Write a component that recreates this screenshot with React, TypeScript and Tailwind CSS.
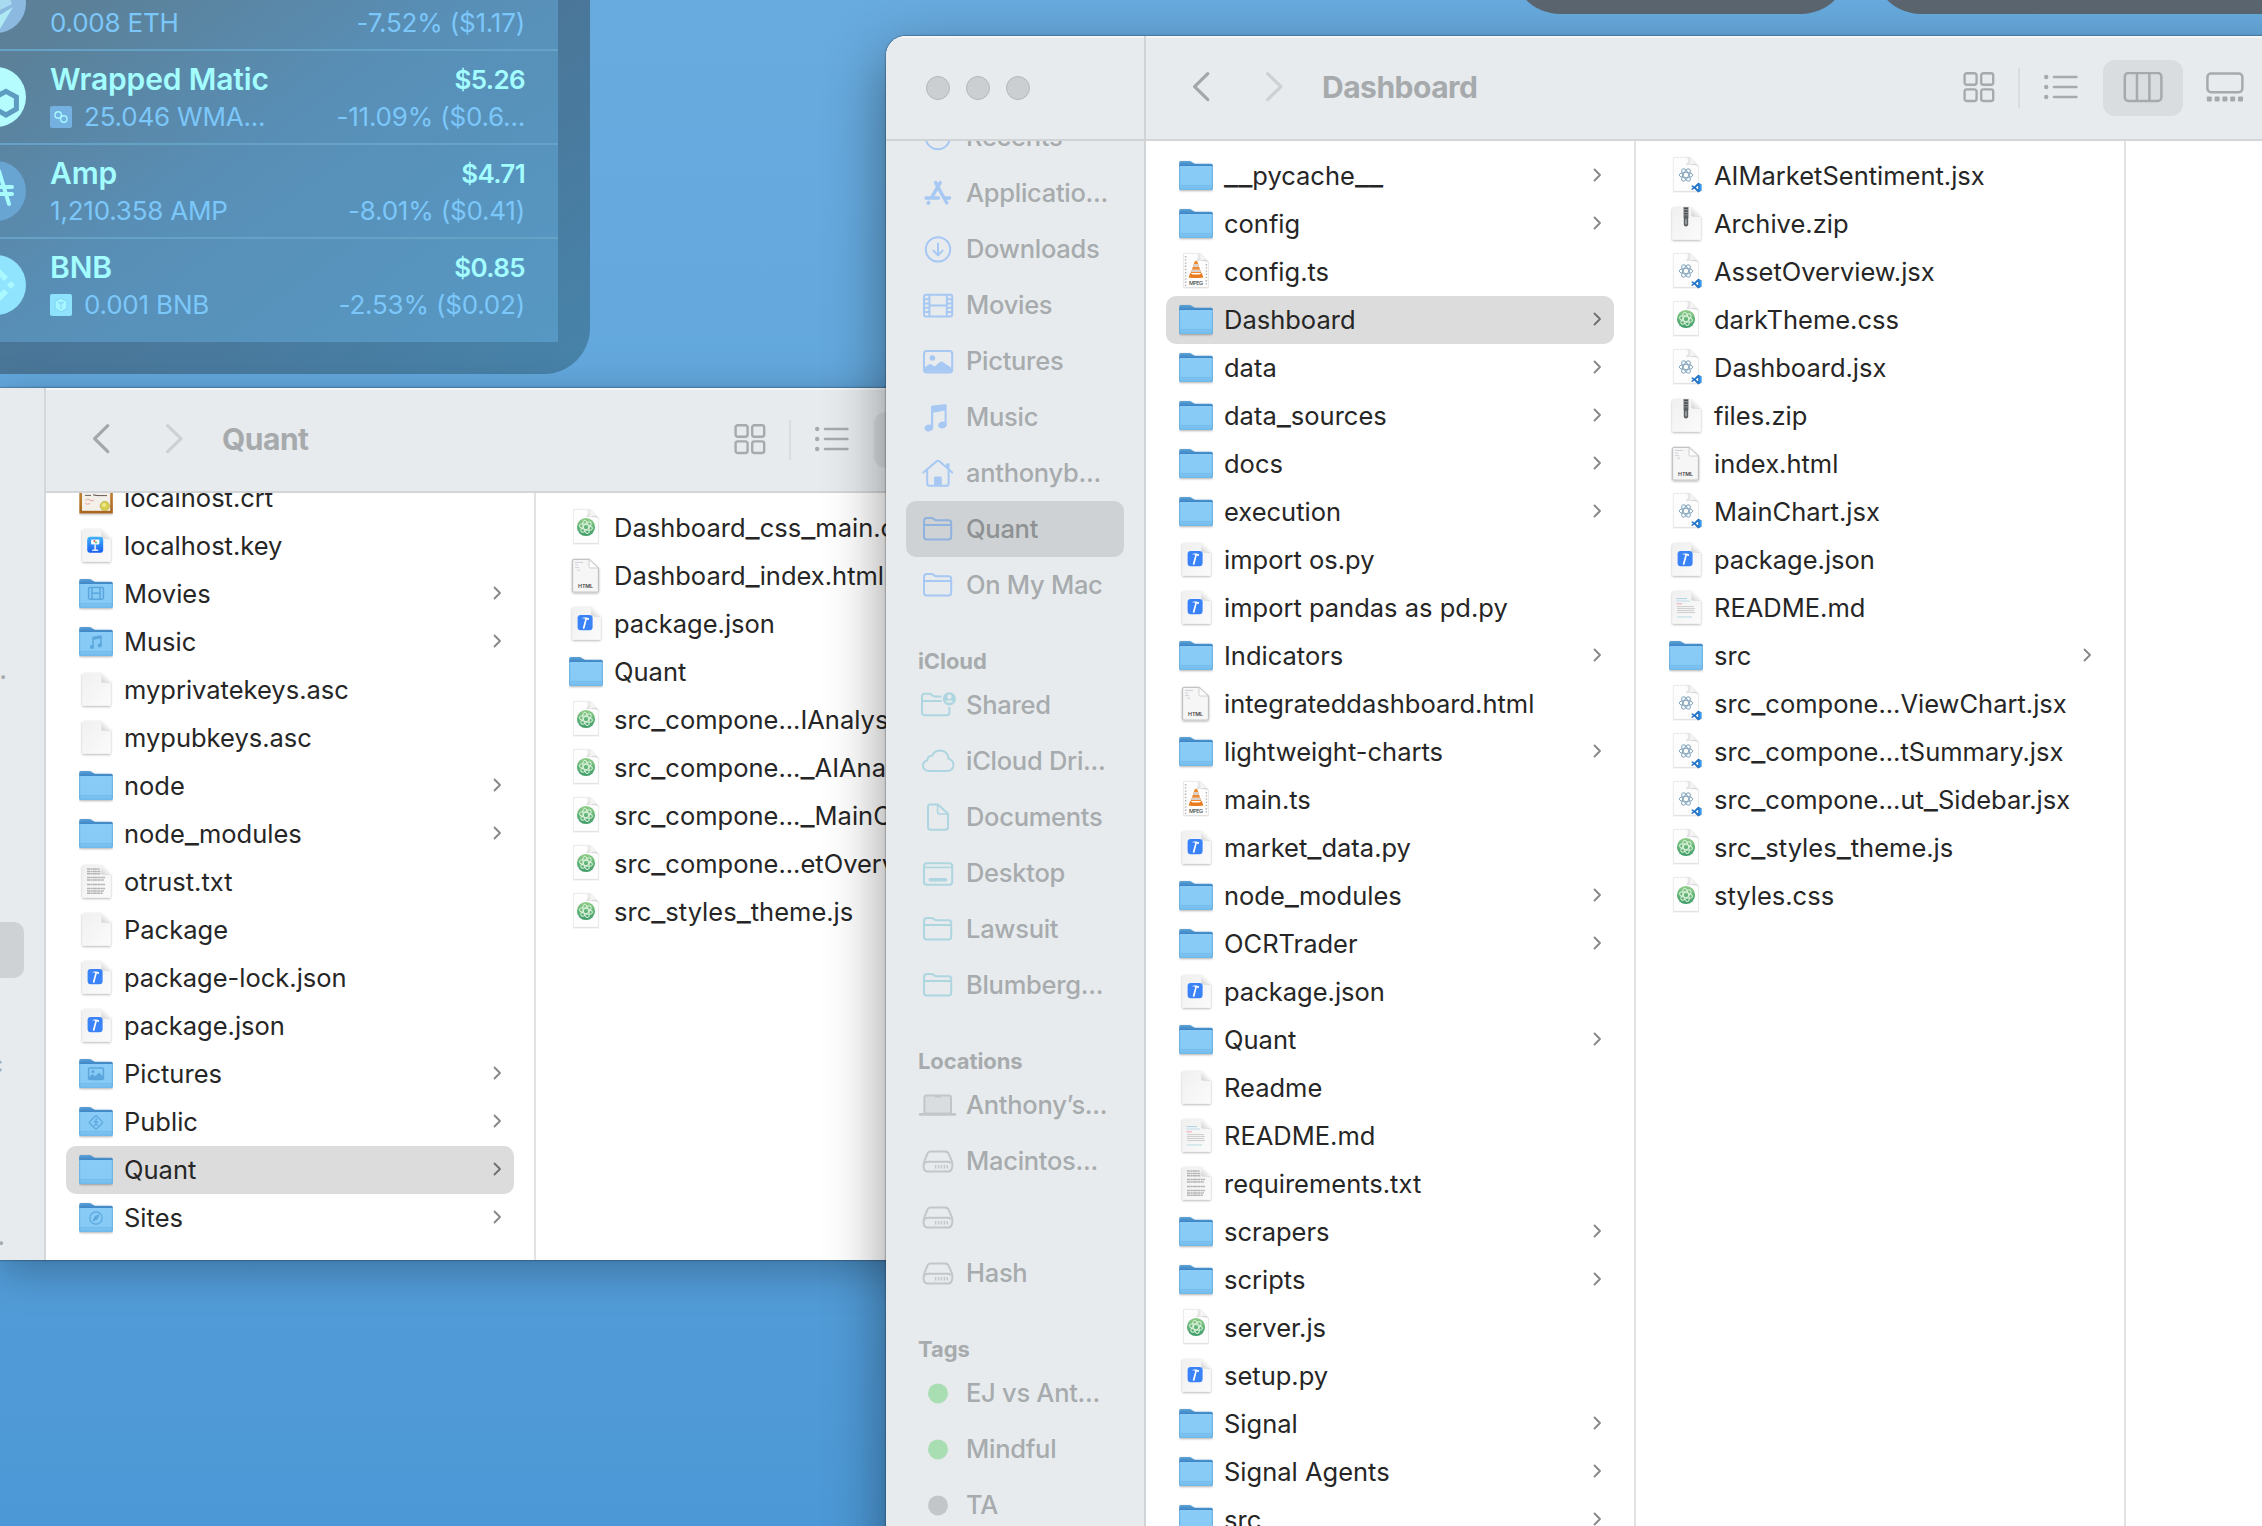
import React from "react";

type Kind =
  | "folder" | "movies" | "music" | "pictures" | "public" | "sites"
  | "blank" | "xcode" | "atom" | "react" | "html" | "zip" | "vlc" | "md" | "txt" | "keynote" | "cert";
type Entry = [string, Kind];

/* ---------- file icons, drawn in a 34x48 row-high box ---------- */

function Defs() {
  return (
    <svg width="0" height="0" className="absolute">
      <defs>
        <linearGradient id="fFront" x1="0" y1="0" x2="0" y2="1">
          <stop offset="0" stopColor="#8accf7" />
          <stop offset="0.78" stopColor="#86caf6" />
          <stop offset="1" stopColor="#6fb8e8" />
        </linearGradient>
        <linearGradient id="fBack" x1="0" y1="0" x2="0" y2="1">
          <stop offset="0" stopColor="#5ba2d6" />
          <stop offset="0.16" stopColor="#3f87c7" />
        </linearGradient>
        <linearGradient id="paper" x1="0" y1="0" x2="1" y2="1">
          <stop offset="0" stopColor="#f0f0f0" />
          <stop offset="1" stopColor="#fbfbfb" />
        </linearGradient>
        <linearGradient id="fold" x1="0" y1="1" x2="1" y2="0">
          <stop offset="0" stopColor="#d2d2d2" />
          <stop offset="0.6" stopColor="#fafafa" />
        </linearGradient>
        <linearGradient id="atomG" x1="0" y1="0" x2="0" y2="1">
          <stop offset="0" stopColor="#8fcd88" />
          <stop offset="1" stopColor="#3c9c6b" />
        </linearGradient>
        <linearGradient id="keyG" x1="0" y1="0" x2="0" y2="1">
          <stop offset="0" stopColor="#3fb2f8" />
          <stop offset="1" stopColor="#1a5df0" />
        </linearGradient>
        <linearGradient id="certG" x1="0" y1="0" x2="0" y2="1">
          <stop offset="0" stopColor="#c98a3c" />
          <stop offset="1" stopColor="#a8651b" />
        </linearGradient>
        <filter id="soft" x="-20%" y="-20%" width="140%" height="150%">
          <feDropShadow dx="0" dy="0.9" stdDeviation="0.8" floodColor="#000" floodOpacity="0.32" />
        </filter>
      </defs>
    </svg>
  );
}

function Folder({ children }: { children?: React.ReactNode }) {
  return (
    <>
      <g filter="url(#soft)">
        <path d="M0.2 10.6Q0.2 9 1.8 9H10.4Q11.8 9 12.8 9.9L14.4 11.1Q15.2 11.8 16.4 11.8H32.2Q33.8 11.8 33.8 13.4V36.2Q33.8 38 32 38H2Q0.2 38 0.2 36.2Z" fill="url(#fBack)" />
        <path d="M0.2 15.6Q0.2 13.9 1.8 13.9H32.2Q33.8 13.9 33.8 15.6V36.2Q33.8 38 32 38H2Q0.2 38 0.2 36.2Z" fill="url(#fFront)" />
      </g>
      <path d="M1 33.6H33" stroke="#6db6e6" strokeWidth="0.8" />
      <path d="M0.7 16V36.4M33.3 16V36.4" stroke="#67aede" strokeWidth="0.8" />
      <g stroke="#5ba6dc" fill="none" strokeWidth="1.5" strokeLinecap="round" strokeLinejoin="round">{children}</g>
    </>
  );
}

function Paper({ children }: { children?: React.ReactNode }) {
  return (
    <>
      <path d="M3.2 8.6Q3.2 7 4.8 7H22.2L31.8 16.2V38.2Q31.8 39.8 30.2 39.8H4.8Q3.2 39.8 3.2 38.2Z" fill="url(#paper)" filter="url(#soft)" />
      <path d="M22.2 7L31.8 16.2H23.8Q22.2 16.2 22.2 14.6Z" fill="url(#fold)" />
      <path d="M22.2 15.2Q22.6 16.6 24 16.6H31" stroke="#dcdcdc" strokeWidth="0.8" fill="none" />
      {children}
    </>
  );
}

function ThinPaper({ children }: { children?: React.ReactNode }) {
  return (
    <>
      <path d="M4.4 5.4H21.2L29.6 14V39.4H4.4Z" fill="#fdfdfd" stroke="#e6e6e6" strokeWidth="0.9" />
      <path d="M4 39.8H30" stroke="#dcdcdc" strokeWidth="0.9" />
      <path d="M21.2 5.4L29.6 14Q24.4 12.4 16.6 13.2Q20.2 9.4 18.2 5.6Z" fill="#e6e6e6" />
      <path d="M20.4 5.4L29.6 14Q25 12.6 21.4 12.6Q22.2 9.2 20.4 5.4Z" fill="#f6f6f6" />
      <path d="M21.4 12.6Q25 12.4 29.6 14Q26 10.6 21.4 12.6Z" fill="#cccccc" />
      {children}
    </>
  );
}

function Orbits({ s, color, w, turn }: { s: number; color: string; w: number; turn: number }) {
  return (
    <g stroke={color} strokeWidth={w} fill="none">
      {[0, 60, 120].map((a) => (
        <ellipse key={a} cx="17" cy="23" rx={s} ry={s * 0.4} transform={`rotate(${a + turn} 17 23)`} />
      ))}
    </g>
  );
}

function glyph(kind: Kind): React.ReactNode {
  switch (kind) {
    case "folder":
      return <Folder />;
    case "movies":
      return (
        <Folder>
          <rect x="9.6" y="17.4" width="14.8" height="11.8" rx="1.4" />
          <path d="M12.9 17.4V29.2M21.1 17.4V29.2M12.9 23.3H21.1" />
        </Folder>
      );
    case "music":
      return (
        <Folder>
          <path d="M14 29V19.6L22 18V27.4M14 21.2L22 19.6" />
          <circle cx="12.8" cy="29" r="1.3" fill="#5ba6dc" />
          <circle cx="20.8" cy="27.4" r="1.3" fill="#5ba6dc" />
        </Folder>
      );
    case "pictures":
      return (
        <Folder>
          <rect x="9.6" y="18" width="14.8" height="11.4" rx="1.4" />
          <path d="M10 28L13.4 25L16 27L20 23.6L24 27.4V29H10Z" fill="#5ba6dc" />
          <circle cx="14" cy="21.6" r="0.8" fill="#5ba6dc" />
        </Folder>
      );
    case "public":
      return (
        <Folder>
          <rect x="12" y="19.4" width="10" height="10" rx="1.2" transform="rotate(45 17 24.4)" strokeWidth="1.2" />
          <path d="M17 22.6V25.2L15.6 27.6M17 25.2L18.4 27.4M15 23.8L17 23L19 24.4" strokeWidth="1.1" />
          <circle cx="17.2" cy="21" r="0.6" fill="#5ba6dc" strokeWidth="0.6" />
        </Folder>
      );
    case "sites":
      return (
        <Folder>
          <circle cx="17" cy="24" r="6.2" strokeWidth="1.2" />
          <path d="M19.8 21.2L18 25L14.2 26.8L16 23Z" strokeWidth="1" fill="#5ba6dc" />
        </Folder>
      );
    case "blank":
      return <Paper />;
    case "xcode":
      return (
        <Paper>
          <rect x="8.6" y="15" width="15" height="15.2" rx="3.2" fill="#3a82f7" />
          <path d="M14.7 28L17 19.4" stroke="#fff" strokeWidth="1.7" strokeLinecap="round" />
          <path d="M12.4 18.4Q14.6 16.9 17.4 17.6L20 18.2V20L17.8 19.6Q14.6 18 12.4 18.4Z" fill="#fff" />
        </Paper>
      );
    case "keynote":
      return (
        <Paper>
          <rect x="8.2" y="14.8" width="16" height="16" rx="3.4" fill="url(#keyG)" />
          <rect x="12" y="17.4" width="8.4" height="5" rx="0.8" fill="#f4f8ff" />
          <rect x="15.3" y="22.4" width="1.8" height="5.6" fill="#dbe5f5" />
          <rect x="13" y="27.6" width="6.4" height="1.3" rx="0.6" fill="#dbe5f5" />
          <circle cx="15.4" cy="19" r="0.9" fill="#e8552e" />
          <circle cx="17" cy="20.4" r="0.9" fill="#49b64d" />
        </Paper>
      );
    case "txt":
      return (
        <Paper>
          <g stroke="#b4b4b4" strokeWidth="1.5" strokeDasharray="3.2 0.4 2 0.3 4 0.3">
            <path d="M8 11H20.6" />
            <path d="M8 13.4H21.6" />
            <path d="M8 15.8H21.6" />
            <path d="M8 19.6H26" />
            <path d="M8 22H25" />
            <path d="M8 26.4H26" />
            <path d="M8 30.6H26" />
            <path d="M8 33H25" />
            <path d="M8 35.2H24" />
          </g>
        </Paper>
      );
    case "md":
      return (
        <Paper>
          <path d="M7.4 14.6H18" stroke="#a9d4e6" strokeWidth="1" />
          <path d="M7.4 17H21" stroke="#b7dbe8" strokeWidth="0.9" />
          <path d="M7.4 19.8H13" stroke="#f0a9bd" strokeWidth="1" />
          <path d="M8 22.6H25M8 24.6H26M8 26.6H25M8 28.6H26" stroke="#cdcdcd" strokeWidth="1" />
          <path d="M8 33H23" stroke="#b9dbe4" strokeWidth="1" />
        </Paper>
      );
    case "zip":
      return (
        <Paper>
          <rect x="14.4" y="7" width="5.2" height="11" fill="#8b8f92" />
          <path d="M15 8.4H19M15 11H19M15 13.6H19M15 16.2H19" stroke="#4b5053" strokeWidth="1.3" />
          <rect x="14.8" y="16" width="4.4" height="10.4" rx="1.8" fill="#5d6265" />
          <rect x="16.2" y="19" width="1.6" height="5.4" rx="0.6" fill="#a0a4a6" />
        </Paper>
      );
    case "html":
      return (
        <>
          <path d="M3.6 9Q3.6 7.4 5.2 7.4H20L29.4 16V38.6Q29.4 40 28 40H5Q3.6 40 3.6 38.6Z" fill="#f6f6f6" stroke="#c3c3c3" strokeWidth="1.1" filter="url(#soft)" />
          <path d="M20 7.4L29.4 16H21.4Q20 16 20 14.6Z" fill="#fdfdfd" stroke="#c9c9c9" strokeWidth="0.9" />
          <path d="M6 10.4H14M6 13H9M6 15.6H10M8 18.2H11" stroke="#cfd0da" strokeWidth="1" />
          <text x="16.6" y="36.4" textAnchor="middle" fontSize="5.4" fontWeight="600" fontFamily="Inter, sans-serif" fill="#4a4a4a" textLength="15">HTML</text>
        </>
      );
    case "vlc":
      return (
        <ThinPaper>
          <path d="M6.6 8V38M27.4 16V38" stroke="#b5b5b5" strokeWidth="1.5" strokeDasharray="1.4 1.8" />
          <path d="M15.6 13.4Q17 12 18.4 13.4L22.2 25H11.8Z" fill="#f08a2c" />
          <path d="M14.9 16H19.1L20 19H14ZM13.2 21.4H20.8L21.6 24H12.4Z" fill="#d9d2cc" />
          <path d="M11.4 24.4L9.6 29.4Q17 30.6 24.4 29.4L22.6 24.4Q22 26.6 17 26.6Q12 26.6 11.4 24.4Z" fill="#e97d1e" />
          <text x="17" y="37" textAnchor="middle" fontSize="5.4" fontWeight="500" fontFamily="Inter, sans-serif" fill="#4a4a4a" textLength="14">MPEG</text>
        </ThinPaper>
      );
    case "atom":
      return (
        <ThinPaper>
          <circle cx="17" cy="23" r="9.1" fill="url(#atomG)" />
          <Orbits s={6.6} color="#def3dc" w={1} turn={15} />
        </ThinPaper>
      );
    case "react":
      return (
        <ThinPaper>
          <Orbits s={6.8} color="#85a5be" w={1} turn={0} />
          <path d="M29.2 30.8L32.4 32.2V38.8L29.2 40.4L25.2 36.6L23.4 38L22.2 37.2L24 35.6L22.2 34L23.4 33.2L25.2 34.6ZM29.2 33.6L26.8 35.6L29.2 37.6Z" fill="#2272c6" fillRule="evenodd" />
          <path d="M30.6 31.4L32.4 32.2V38.8L30.6 39.6Z" fill="#3c9cf0" />
        </ThinPaper>
      );
    case "cert":
      return (
        <>
          <rect x="0.4" y="12" width="33.4" height="27.4" fill="url(#certG)" filter="url(#soft)" />
          <rect x="3" y="14" width="28.2" height="22.8" fill="#f3efe9" />
          <path d="M6 21.4H12M14 20.8L18 21.6H28" stroke="#67625e" strokeWidth="1" />
          <path d="M6.4 26.4Q9 24 11 26T15 26M6.4 29.4Q8 31 11 29.6" stroke="#e5a3a0" strokeWidth="1" fill="none" />
          <circle cx="25.8" cy="32" r="4.6" fill="#d9cf4e" stroke="#bdb146" strokeWidth="0.8" />
          <circle cx="25" cy="31" r="2" fill="#eee88c" />
        </>
      );
  }
}

const hasArrow = (k: Kind) => ["folder", "movies", "music", "pictures", "public", "sites"].includes(k);

/* Underscores are set a little larger so that they are as wide as a letter. */
function FileName({ name }: { name: string }) {
  return (
    <>
      {name.split(/(_+)/).map((part, i) =>
        part.startsWith("_") ? (
          <span key={i} className="text-[31px] leading-none">{part}</span>
        ) : (
          part
        ),
      )}
    </>
  );
}

function Row({ entry: [name, kind], selected }: { entry: Entry; selected?: boolean }) {
  return (
    <div className={`flex h-12 shrink-0 items-center rounded-[10px] pr-3 pl-[13px] ${selected ? "bg-[#dcdcdc]" : ""}`}>
      <svg width="34" height="48" viewBox="0 0 34 48" className="shrink-0">{glyph(kind)}</svg>
      <span className="mb-px ml-[11px] h-[46px] grow whitespace-nowrap text-[25.5px] leading-[46px] tracking-[0px] text-[#262626]">
        <FileName name={name} />
      </span>
      {hasArrow(kind) && (
        <svg width="9" height="14" viewBox="0 0 9 14" fill="none" className="mb-0.5 shrink-0">
          <path d="M1.5 1.5L7 7L1.5 12.5" stroke={selected ? "#6f6f6f" : "#868686"} strokeWidth="1.8" strokeLinecap="round" strokeLinejoin="round" />
        </svg>
      )}
    </div>
  );
}

function Column({ items, selected, className }: { items: Entry[]; selected?: number; className: string }) {
  return (
    <div className={`flex w-[490px] shrink-0 flex-col overflow-hidden border-r-2 border-[#e2e2e2] px-5 ${className}`}>
      {items.map((it, i) => (
        <Row key={i} entry={it} selected={i === selected} />
      ))}
    </div>
  );
}

/* ---------- toolbar ---------- */

function NavArrows() {
  return (
    <svg width="92" height="32" viewBox="0 0 92 32" fill="none" strokeWidth="3.2" strokeLinecap="round" strokeLinejoin="round" className="mb-px">
      <path d="M15.8 2.6L2.6 15.6L15.8 28.6" stroke="#a3a7a9" />
      <path d="M75.6 2.6L89 15.6L75.6 28.6" stroke="#cdd1d3" />
    </svg>
  );
}

function GridIcon() {
  return (
    <svg width="32" height="32" viewBox="0 0 32 32" fill="none" stroke="#a6aaac" strokeWidth="2.4">
      <rect x="1.6" y="1.2" width="12" height="11.6" rx="2.2" />
      <rect x="18.2" y="1.2" width="12" height="11.6" rx="2.2" />
      <rect x="1.6" y="17.4" width="12" height="11.6" rx="2.2" />
      <rect x="18.2" y="17.4" width="12" height="11.6" rx="2.2" />
    </svg>
  );
}

function ListIcon() {
  return (
    <svg width="34" height="28" viewBox="0 0 34 28" fill="none" stroke="#a6aaac" strokeWidth="2.6" strokeLinecap="round">
      {[3, 13, 23].map((y) => (
        <g key={y}>
          <circle cx="2.2" cy={y} r="2.2" fill="#a6aaac" stroke="none" />
          <path d={`M10 ${y}H32.4`} />
        </g>
      ))}
    </svg>
  );
}

function Toolbar({ title, titleWidth }: { title: string; titleWidth: string }) {
  return (
    <div className="flex h-[105px] shrink-0 items-center border-b-2 border-[#d3d6d8] bg-[#e7ebee] pl-[46px] shadow-[inset_0_2px_0_#f4f6f7]">
      <NavArrows />
      <div className={`mb-px ml-[38px] text-[30px] leading-9 font-bold tracking-[-0.5px] text-[#a6aaac] ${titleWidth}`}>{title}</div>
      <ViewButtons />
    </div>
  );
}

function ViewButtons() {
  return (
    <div className="flex items-center">
      <GridIcon />
      <div className="ml-[23px] h-10 w-0.5 bg-[#d9dde0]" />
      <div className="ml-6"><ListIcon /></div>
      <div className="ml-[25px] flex h-14 w-20 items-center justify-center rounded-[12px] bg-[#d9dde0]">
        <svg width="40" height="32" viewBox="0 0 40 32" fill="none" stroke="#a6aaac" strokeWidth="2.5">
          <rect x="1.8" y="1" width="36.6" height="28" rx="3.6" />
          <path d="M14 1V29M26.4 1V29" />
        </svg>
      </div>
      <svg width="38" height="32" viewBox="0 0 38 32" fill="none" stroke="#a6aaac" strokeWidth="2.5" className="ml-[23px]">
        <rect x="1.4" y="1.6" width="35" height="18.6" rx="3.6" />
        <g fill="#a6aaac" stroke="none">
          {[0.8, 8.6, 16.4, 24.2, 32].map((x) => (
            <rect key={x} x={x} y="24.4" width="5" height="5.2" rx="1" />
          ))}
        </g>
      </svg>
    </div>
  );
}

/* ---------- sidebar ---------- */

const B = "#a6c8f3";
const T = "#aed6e0";
const G = "#c2c6c9";

const folderPath = (
  <>
    <path d="M6 8Q6 5 8.8 5H13.4Q14.6 5 15.6 5.8L16.6 6.6Q17.4 7.2 18.6 7.2H30.6Q33.2 7.2 33.2 10V23.8Q33.2 26.4 30.6 26.4H8.6Q6 26.4 6 23.8Z" />
    <path d="M6 12H33.2" />
  </>
);

const disk = (
  <g stroke={G}>
    <path d="M12.4 6.6H27.2Q29.4 6.6 30.6 8.6L33.4 14.8Q34.4 17 34.4 19.4Q34.4 26.6 29.6 26.6H10Q5.6 26.6 5.6 21.2Q5.6 18 6.6 15.8L9.4 8.6Q10.4 6.6 12.4 6.6Z" />
    <path d="M7 18Q8.6 16.8 10.4 16.8H29.4Q31.4 16.8 33 18" />
    <path d="M17 21.8H30.6" strokeWidth="3.6" strokeDasharray="1.4 1.5" />
  </g>
);

const sideIcons: Record<string, React.ReactNode> = {
  clock: (
    <g stroke={B}>
      <circle cx="19.8" cy="16" r="12.2" />
      <path d="M19.8 8V16H14" />
    </g>
  ),
  apps: (
    <g stroke={B} strokeWidth="3.4" strokeLinecap="round">
      <path d="M17.6 5.6L28.8 26M22.2 5.6L13.6 20.6M8 21H20.6M26.6 21H31.6M10.8 25.4L10.2 26.4" />
    </g>
  ),
  down: (
    <g stroke={B} strokeLinecap="round" strokeLinejoin="round">
      <circle cx="20" cy="16.4" r="12.2" />
      <path d="M20 10.4V21.8M15.4 17.6L20 22.2L24.6 17.6" />
    </g>
  ),
  movie: (
    <g stroke={B}>
      <rect x="6" y="5.8" width="28.2" height="21.6" rx="2" />
      <path d="M11.4 5.8V27.4M28.8 5.8V27.4M11.4 16.6H28.8M6 10.2H11.4M6 14.4H11.4M6 18.8H11.4M6 23H11.4M28.8 10.2H34.2M28.8 14.4H34.2M28.8 18.8H34.2M28.8 23H34.2" />
    </g>
  ),
  picture: (
    <g stroke={B}>
      <rect x="6" y="6" width="28.2" height="21.4" rx="2.6" />
      <circle cx="14.4" cy="13" r="2.8" fill={B} stroke="none" />
      <path d="M6.6 22.6L11.4 19.2Q12.2 18.8 13 19.2L16.6 21.6L22.4 16.8Q23.4 16 24.4 16.8L33.8 23V26.8H6.6Z" fill={B} stroke="none" />
    </g>
  ),
  music: (
    <g fill={B} stroke="none">
      <ellipse cx="10.8" cy="27" rx="4.3" ry="3.3" transform="rotate(-15 10.8 27)" />
      <ellipse cx="24.4" cy="24" rx="4.3" ry="3.3" transform="rotate(-15 24.4 24)" />
      <path d="M13 6.2Q13 4.8 14.4 4.5L27 3.2Q28.6 3 28.6 4.4V24H26.6V9.6L15.2 11.8V27H13Z" />
    </g>
  ),
  home: (
    <g stroke={B} strokeLinecap="round" strokeLinejoin="round">
      <path d="M5.4 15.6L18.6 4.2Q20 3.2 21.4 4.2L34.2 15.6M9.2 13.4V26.4Q9.2 28.8 11.4 28.8H28.4Q30.6 28.8 30.6 26.4V13.4" />
      <path d="M29.8 6.4V11.4" strokeWidth="3.4" strokeLinecap="butt" />
      <path d="M16 28.8V20.8Q16 19.4 17.4 19.4H22.4Q23.8 19.4 23.8 20.8V28.8Z" fill={B} stroke="none" />
    </g>
  ),
  folder: <g stroke={B}>{folderPath}</g>,
  folderSel: <g stroke="#8fb2de">{folderPath}</g>,
  folderT: <g stroke={T}>{folderPath}</g>,
  shared: (
    <g stroke={T}>
      <path d="M23.6 7.4H16.6Q15.4 7.4 14.6 6.8L13.6 5.8Q12.6 4.8 11.4 4.8H6.8Q4 4.8 4 7.6V23.6Q4 26.2 6.6 26.2H28.6Q31.4 26.2 31.4 23.4V18M4 12H23.6" />
      <circle cx="31.4" cy="9.8" r="6.6" fill={T} stroke="none" />
      <circle cx="31.4" cy="7.8" r="2.2" fill="#e7ebee" stroke="none" />
      <path d="M27.4 13.4Q28.4 11.2 31.4 11.2T35.4 13.4" fill="#e7ebee" stroke="none" />
    </g>
  ),
  cloud: (
    <path d="M11.4 26Q5 26 5 20.6Q5 16.4 9.4 15.2Q9.6 11 14 10.8Q16.4 5.6 22 5.6Q29.6 5.8 30.4 13.6Q35.4 15 35.4 19.8Q35.4 26 28.4 26Z" stroke={T} />
  ),
  doc: (
    <g stroke={T} strokeLinejoin="round">
      <path d="M10 5.8Q10 3.4 12.4 3.4H20L30 12.8V26Q30 28.8 27.4 28.8H12.6Q10 28.8 10 26Z" />
      <path d="M19.6 3.4V11Q19.6 13 21.6 13H30" strokeWidth="1.6" />
    </g>
  ),
  desktop: (
    <g stroke={T}>
      <rect x="6" y="6.2" width="28.2" height="21.6" rx="2.8" />
      <path d="M6 10.4H34.2" strokeWidth="1.6" />
      <path d="M12.2 22.8H27.6" strokeWidth="3.4" strokeLinecap="round" />
    </g>
  ),
  laptop: (
    <g stroke={G}>
      <path d="M6.4 24.4V8.8Q6.4 6.6 8.6 6.6H30.8Q33 6.6 33 8.8V24.4Z" fill="#dadde0" />
      <path d="M17 7.6H23" />
      <path d="M2.2 25.4H36.8" strokeWidth="2.8" strokeLinecap="round" />
    </g>
  ),
  disk,
  green: <circle cx="20" cy="16.4" r="10" fill="#a9ddb2" stroke="none" />,
  gray: <circle cx="20" cy="16.4" r="10" fill="#c3c6c8" stroke="none" />,
};

function SideItem({ icon, label, selected }: { icon: string; label: string; selected?: boolean }) {
  return (
    <div className={`mx-5 flex h-14 shrink-0 items-center rounded-[10px] pl-3 ${selected ? "bg-[#ced2d4] text-[#8e9294]" : "text-[#a7abad]"}`}>
      <svg width="40" height="32" viewBox="0 0 40 32" fill="none" strokeWidth="2" className="shrink-0 overflow-visible">{sideIcons[icon]}</svg>
      <span className="ml-2 whitespace-nowrap text-[25.5px] leading-[54px] font-medium tracking-[-0.28px]">{label}</span>
    </div>
  );
}

function SideHead({ children }: { children: string }) {
  return <div className="flex h-16 shrink-0 items-end px-8 pb-1 text-[22px] leading-6 font-bold tracking-[-0.1px] text-[#a7abad]">{children}</div>;
}

/* ---------- data ---------- */

const homeFiles: Entry[] = [
  ["localhost.crt", "cert"], ["localhost.key", "keynote"], ["Movies", "movies"], ["Music", "music"],
  ["myprivatekeys.asc", "blank"], ["mypubkeys.asc", "blank"], ["node", "folder"], ["node_modules", "folder"],
  ["otrust.txt", "txt"], ["Package", "blank"], ["package-lock.json", "xcode"], ["package.json", "xcode"],
  ["Pictures", "pictures"], ["Public", "public"], ["Quant", "folder"], ["Sites", "sites"],
];

const quantFiles: Entry[] = [
  ["Dashboard_css_main.css", "atom"], ["Dashboard_index.html", "html"], ["package.json", "xcode"], ["Quant", "folder"],
  ["src_compone...IAnalysis.js", "atom"], ["src_compone..._AIAnalysis.js", "atom"], ["src_compone..._MainChart.js", "atom"],
  ["src_compone...etOverview.js", "atom"], ["src_styles_theme.js", "atom"],
];

const projectFiles: Entry[] = [
  ["__pycache__", "folder"], ["config", "folder"], ["config.ts", "vlc"], ["Dashboard", "folder"], ["data", "folder"],
  ["data_sources", "folder"], ["docs", "folder"], ["execution", "folder"], ["import os.py", "xcode"],
  ["import pandas as pd.py", "xcode"], ["Indicators", "folder"], ["integrateddashboard.html", "html"],
  ["lightweight-charts", "folder"], ["main.ts", "vlc"], ["market_data.py", "xcode"], ["node_modules", "folder"],
  ["OCRTrader", "folder"], ["package.json", "xcode"], ["Quant", "folder"], ["Readme", "blank"], ["README.md", "md"],
  ["requirements.txt", "txt"], ["scrapers", "folder"], ["scripts", "folder"], ["server.js", "atom"],
  ["setup.py", "xcode"], ["Signal", "folder"], ["Signal Agents", "folder"], ["src", "folder"],
];

const dashboardFiles: Entry[] = [
  ["AIMarketSentiment.jsx", "react"], ["Archive.zip", "zip"], ["AssetOverview.jsx", "react"], ["darkTheme.css", "atom"],
  ["Dashboard.jsx", "react"], ["files.zip", "zip"], ["index.html", "html"], ["MainChart.jsx", "react"],
  ["package.json", "xcode"], ["README.md", "md"], ["src", "folder"], ["src_compone...ViewChart.jsx", "react"],
  ["src_compone...tSummary.jsx", "react"], ["src_compone...ut_Sidebar.jsx", "react"], ["src_styles_theme.js", "atom"],
  ["styles.css", "atom"],
];

/* ---------- wallet widget ---------- */

function Coin({ kind }: { kind: string }) {
  return (
    <svg width="60" height="60" viewBox="0 0 60 60">
      {kind === "eth" && (
        <>
          <circle cx="30" cy="30" r="30" fill="#8bb9df" />
          <path d="M34 2L46 31L34 37Z" fill="#a9dbf0" />
          <path d="M34 42L47 34L34 56Z" fill="#aee9f4" />
        </>
      )}
      {kind === "matic" && (
        <>
          <circle cx="30" cy="30" r="30" fill="#b4fcfd" />
          <path d="M40 24.4L50.4 30V42L40 48L29.6 42V30Z" fill="none" stroke="#5e9bc0" strokeWidth="5" />
        </>
      )}
      {kind === "amp" && (
        <>
          <circle cx="30" cy="30" r="30" fill="#69a5d2" />
          <path d="M33 10L43 43M28 26H46M28 33H46" stroke="#a8fbfd" strokeWidth="4" fill="none" strokeLinecap="round" />
        </>
      )}
      {kind === "bnb" && (
        <>
          <circle cx="30" cy="30" r="30" fill="#90e4fd" />
          <path d="M45 26L49 30L45 34L41 30ZM34 14L42 22L38 26L30 18ZM38 34L42 38L34 46L30 42Z" fill="#a9f9ff" />
        </>
      )}
    </svg>
  );
}

function CoinRow(p: { coin: string; name?: string; price?: string; amount: string; change: string; badge?: "matic" | "bnb"; last?: boolean }) {
  return (
    <div className={`flex h-[94px] shrink-0 items-center border-b-2 pr-[33px] ${p.last ? "border-transparent" : "border-[#66a1c6]"}`}>
      <div className="-ml-[34px] shrink-0"><Coin kind={p.coin} /></div>
      <div className="ml-6 flex grow flex-col pt-0.5">
        <div className="flex h-[38px] items-center justify-between text-[#a3fdff]">
          <span className="text-[30px] font-semibold tracking-[-0.15px]">{p.name}</span>
          <span className="text-[26px] font-semibold tracking-[-0.65px]">{p.price}</span>
        </div>
        <div className="flex h-[37px] items-center pb-px text-[26px] tracking-[-0.2px] whitespace-nowrap text-[#7cc7fa]">
          {p.badge && (
            <svg width="22" height="22" viewBox="0 0 22 22" className="mr-3">
              <rect width="22" height="22" rx="2" fill={p.badge === "bnb" ? "#8fe2fb" : "#74b1e0"} />
              {p.badge === "bnb" ? (
                <path d="M11 4L17 7.4V14.4L11 18L5 14.4V7.4ZM8 8L11 10L14 8M11 10V15" fill="#a5f4ff" stroke="#7fd4f5" strokeWidth="1" />
              ) : (
                <g fill="none" stroke="#a6f7ff" strokeWidth="1.4">
                  <circle cx="8.2" cy="9" r="3.2" />
                  <circle cx="13.8" cy="13" r="3.2" />
                </g>
              )}
            </svg>
          )}
          <span>{p.amount}</span>
          <span className="ml-auto">{p.change}</span>
        </div>
      </div>
    </div>
  );
}

export default function App() {
  return (
    <div className="relative h-[1526px] w-[2262px] overflow-hidden bg-linear-to-b from-[#68abdf] via-[#5fa5dc] via-45% to-[#4c98d6] font-['Inter',sans-serif]">
      <Defs />

      {/* dark widgets at the top edge of the desktop */}
      <div className="absolute -top-[100px] left-[1512px] h-[114px] w-[337px] rounded-[48px] bg-[#5c6670]" />
      <div className="absolute -top-[100px] left-[1873px] h-[114px] w-[500px] rounded-[48px] bg-[#5c6670]" />

      {/* wallet widget */}
      <div className="absolute -top-[60px] -left-[60px] h-[434px] w-[650px] rounded-[46px] bg-linear-to-br from-[#4b6a80] via-[#4a7597] to-[#4783aa] pl-[60px]">
        <div className="flex h-[402px] w-[558px] flex-col overflow-hidden bg-linear-to-br from-[#5b8098] from-15% via-[#588fb7] via-50% to-[#5698c3] pt-[17px]">
          <CoinRow coin="eth" amount="0.008 ETH" change="-7.52% ($1.17)" />
          <CoinRow coin="matic" name="Wrapped Matic" price="$5.26" amount="25.046 WMA..." change="-11.09% ($0.6..." badge="matic" />
          <CoinRow coin="amp" name="Amp" price="$4.71" amount="1,210.358 AMP" change="-8.01% ($0.41)" />
          <CoinRow coin="bnb" name="BNB" price="$0.85" amount="0.001 BNB" change="-2.53% ($0.02)" badge="bnb" last />
        </div>
      </div>

      {/* back Finder window */}
      <div className="absolute top-[388px] left-0 flex h-[872px] w-[1400px] overflow-hidden bg-white shadow-[0_0_2px_rgba(0,0,0,0.6),0_10px_40px_rgba(0,0,0,0.28)]">
        <div className="flex w-[46px] shrink-0 flex-col overflow-hidden border-r-2 border-[#d3d7da] bg-[#e7ebee] text-[25.5px] font-medium text-[#a7abad]">
          <div className="mt-[254px] flex h-14 w-[7px] shrink-0 items-center justify-end">.</div>
          <div className="mt-[224px] h-14 w-6 shrink-0 rounded-r-[10px] bg-[#ced2d4]" />
          <div className="mt-[58px] flex h-14 w-[3px] shrink-0 items-center justify-end">c</div>
          <div className="mt-[116px] flex h-14 w-[5px] shrink-0 items-center justify-end">.</div>
        </div>
        <div className="flex grow flex-col overflow-hidden">
          <Toolbar title="Quant" titleWidth="w-[512px]" />
          <div className="flex h-[767px] overflow-hidden">
            <Column items={homeFiles} selected={14} className="-mt-[19px]" />
            <Column items={quantFiles} className="pt-[11px]" />
          </div>
        </div>
      </div>

      {/* front Finder window */}
      <div className="absolute top-9 left-[886px] h-[1600px] w-[1500px] rounded-[20px] shadow-[0_0_2px_rgba(0,0,0,0.75),0_20px_60px_rgba(0,0,0,0.42)]">
        <div className="flex h-full overflow-hidden rounded-[20px] bg-white">
          <div className="flex w-[260px] shrink-0 flex-col border-r-2 border-[#d0d4d7] bg-[#e7ebee] shadow-[inset_0_2px_0_#f4f6f7]">
            <div className="flex h-[105px] shrink-0 items-center gap-4 border-b-2 border-[#d0d3d5] pl-10">
              <div className="size-6 rounded-full border border-[#b5b8ba] bg-[#cccfd1]" />
              <div className="size-6 rounded-full border border-[#b5b8ba] bg-[#cccfd1]" />
              <div className="size-6 rounded-full border border-[#b5b8ba] bg-[#cccfd1]" />
            </div>
            <div className="flex grow flex-col overflow-hidden">
              <div className="-mt-8"><SideItem icon="clock" label="Recents" /></div>
              <SideItem icon="apps" label="Applicatio..." />
              <SideItem icon="down" label="Downloads" />
              <SideItem icon="movie" label="Movies" />
              <SideItem icon="picture" label="Pictures" />
              <SideItem icon="music" label="Music" />
              <SideItem icon="home" label="anthonyb..." />
              <SideItem icon="folderSel" label="Quant" selected />
              <SideItem icon="folder" label="On My Mac" />
              <SideHead>iCloud</SideHead>
              <SideItem icon="shared" label="Shared" />
              <SideItem icon="cloud" label="iCloud Dri..." />
              <SideItem icon="doc" label="Documents" />
              <SideItem icon="desktop" label="Desktop" />
              <SideItem icon="folderT" label="Lawsuit" />
              <SideItem icon="folderT" label="Blumberg..." />
              <SideHead>Locations</SideHead>
              <SideItem icon="laptop" label="Anthony’s..." />
              <SideItem icon="disk" label="Macintos..." />
              <SideItem icon="disk" label="" />
              <SideItem icon="disk" label="Hash" />
              <SideHead>Tags</SideHead>
              <SideItem icon="green" label="EJ vs Ant..." />
              <SideItem icon="green" label="Mindful" />
              <SideItem icon="gray" label="TA" />
            </div>
          </div>
          <div className="flex grow flex-col overflow-hidden">
            <Toolbar title="Dashboard" titleWidth="w-[641px]" />
            <div className="flex grow overflow-hidden">
              <Column items={projectFiles} selected={3} className="pt-[11px]" />
              <Column items={dashboardFiles} className="pt-[11px]" />
            </div>
          </div>
        </div>
      </div>
    </div>
  );
}
